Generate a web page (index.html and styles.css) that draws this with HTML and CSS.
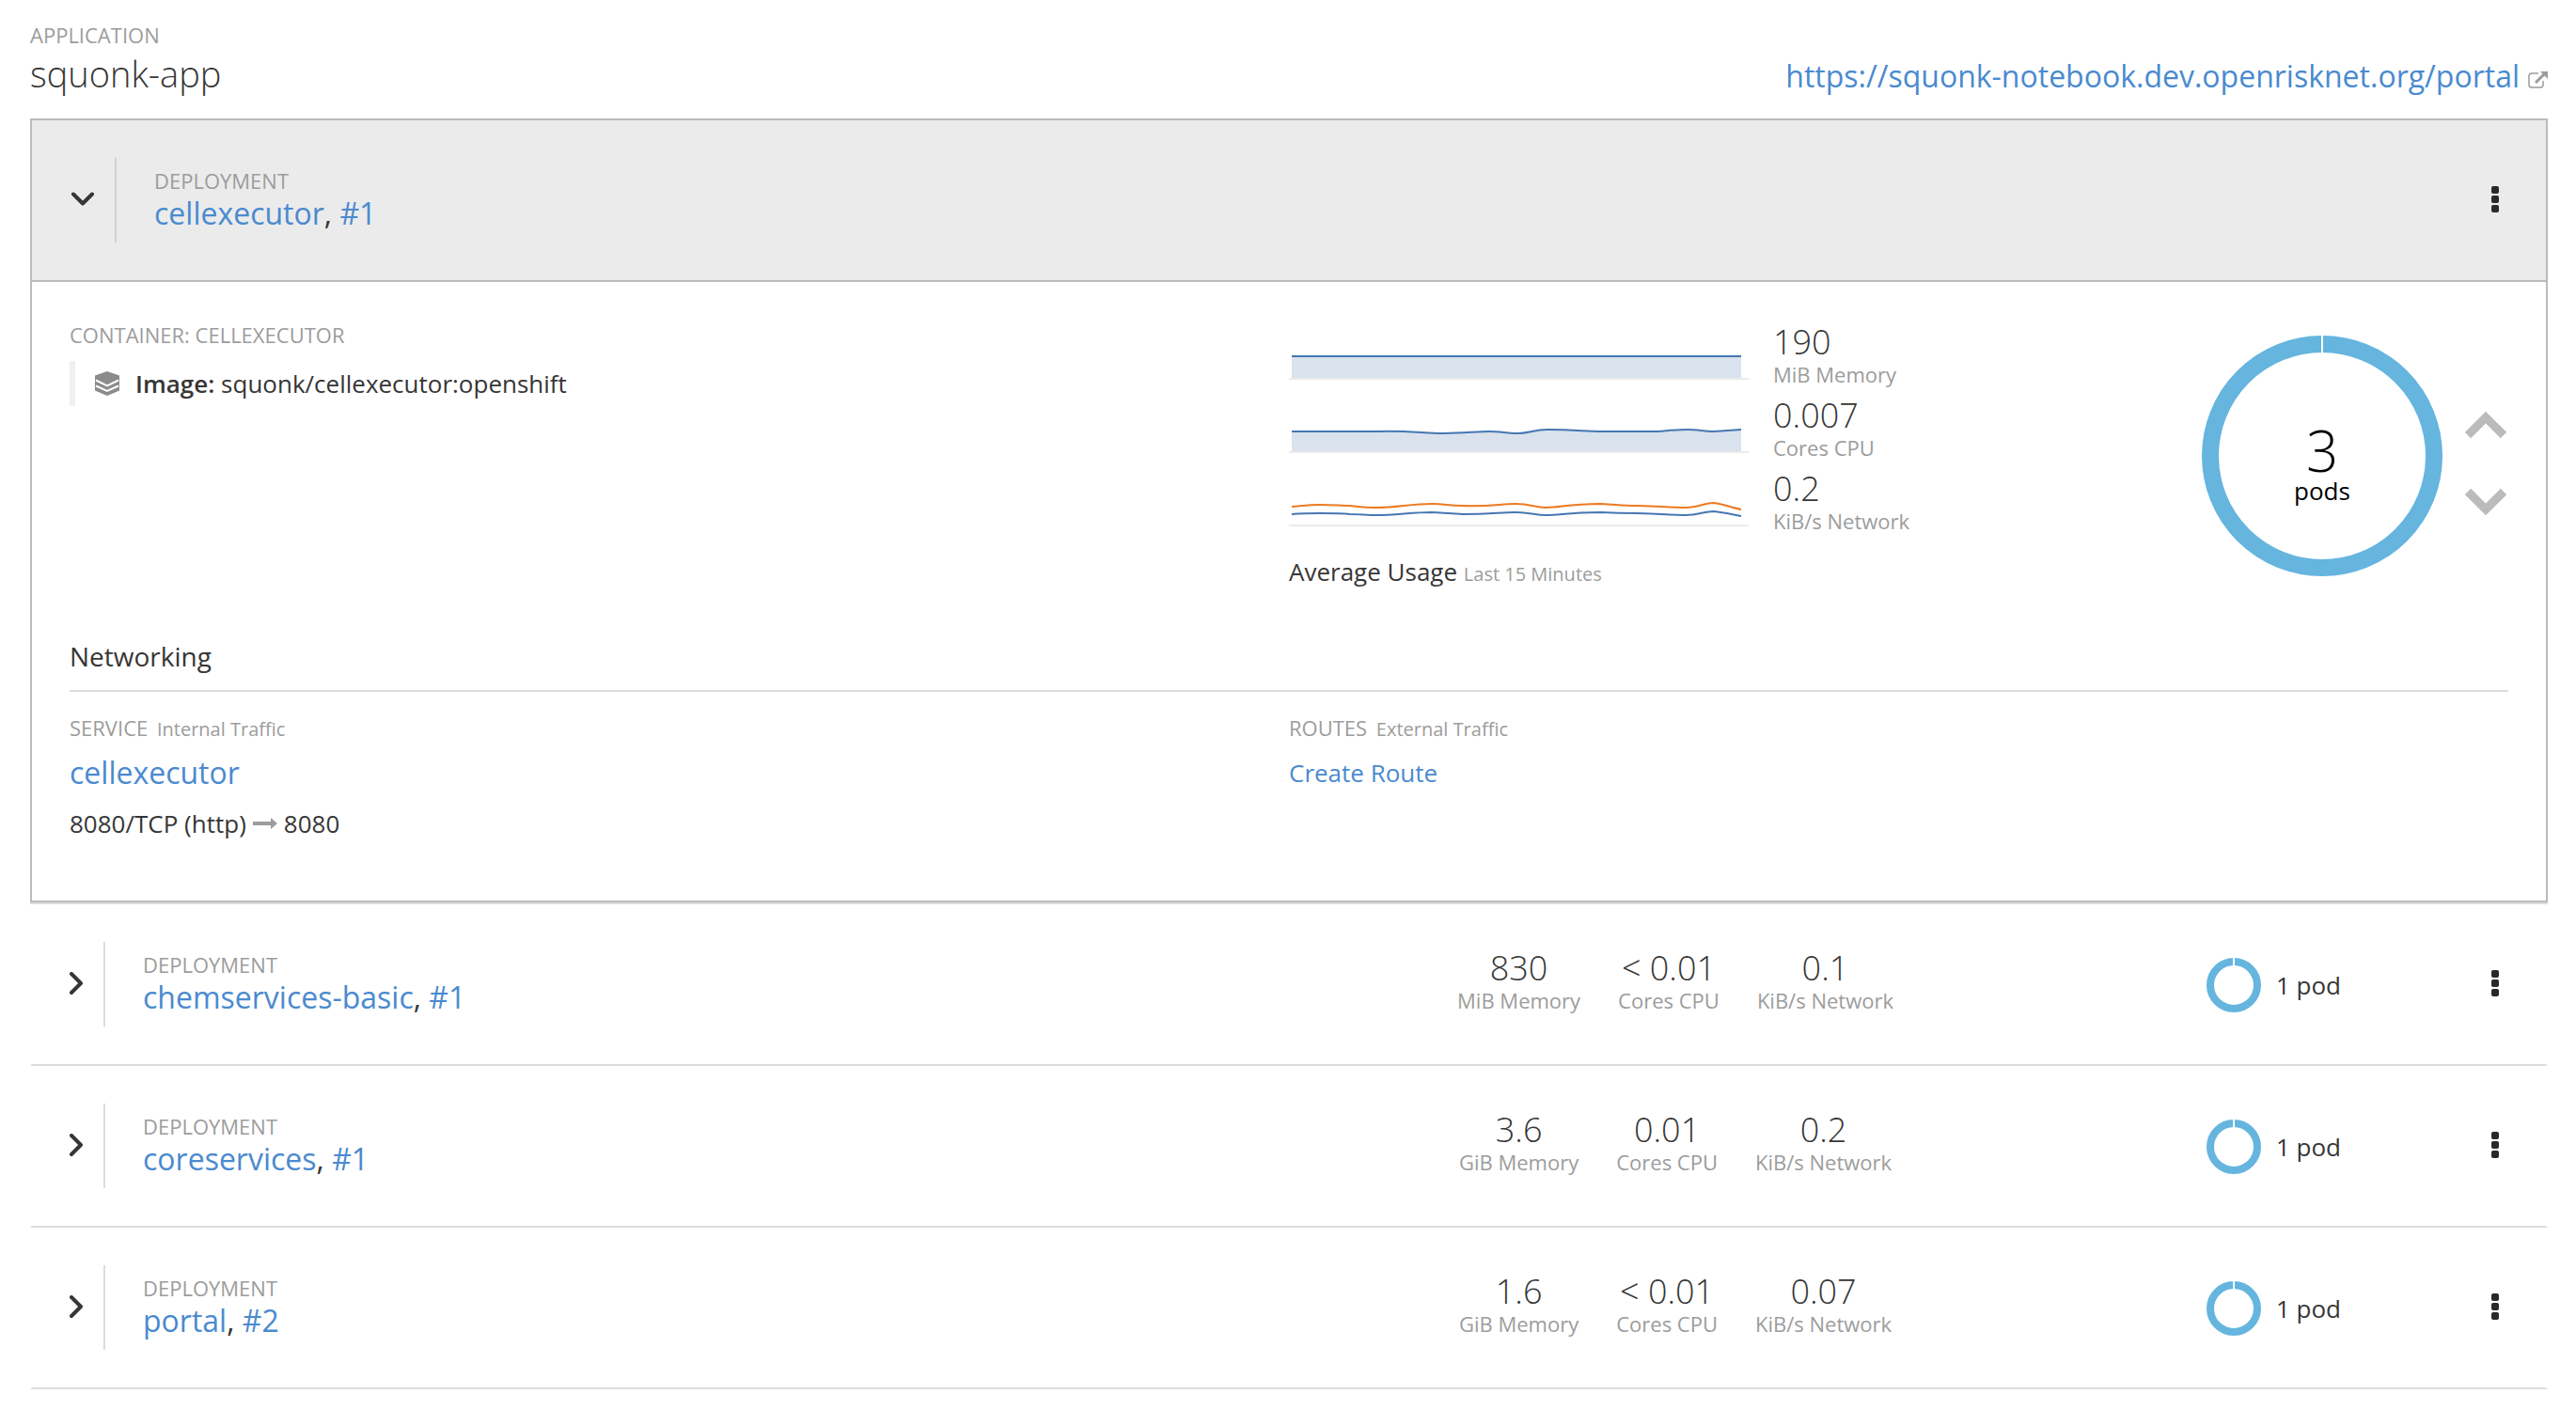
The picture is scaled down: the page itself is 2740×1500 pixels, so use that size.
FILE: index.html
```
<!DOCTYPE html>
<html lang="en">
<head>
    <meta charset="UTF-8">
    <meta name="viewport" content="width=device-width, initial-scale=1.0">
    <title>squonk-app - Overview</title>
    <link rel="stylesheet" href="styles.css">
</head>
<body>
    <!-- Shared icons -->
    <svg class="icon-defs" aria-hidden="true">
        <symbol id="icon-kebab" viewBox="0 0 8 30">
            <rect x="0" y="0" width="8" height="8" rx="2"/>
            <rect x="0" y="10" width="8" height="8" rx="2"/>
            <rect x="0" y="20" width="8" height="8" rx="2"/>
        </symbol>
        <symbol id="icon-angle-right" viewBox="0 0 14 26">
            <path d="M2 2L12 12L2 22"/>
        </symbol>
        <symbol id="icon-donut" viewBox="0 0 58 58">
            <circle cx="29" cy="29" r="25" fill="none" stroke="#65b5df" stroke-width="8"/>
            <path d="M29 0V9" stroke="#fff" stroke-width="2"/>
        </symbol>
    </svg>

    <header class="app-header">
        <div>
            <div class="label">APPLICATION</div>
            <h1>squonk-app</h1>
        </div>
        <div class="app-route">
            <a href="https://squonk-notebook.dev.openrisknet.org/portal">https://squonk-notebook.dev.openrisknet.org/portal</a>
            <svg class="icon-external" viewBox="0 0 22 18">
                <path d="M12 2H5Q2 2 2 5V14Q2 17 5 17H14Q17 17 17 14V10" fill="none" stroke="#9c9c9c" stroke-width="1.500"/>
                <path d="M9 12L18 3" stroke="#9c9c9c" stroke-width="3"/>
                <path d="M14 0H22V8Z" fill="#9c9c9c"/>
            </svg>
        </div>
    </header>

    <main>
        <section class="card">
            <div class="row card-header">
                <div class="row-name">
                    <button class="toggle toggle-open" aria-label="Collapse">
                        <svg viewBox="0 0 26 18"><path d="M4 2.500L14 12.500L24 2.500"/></svg>
                    </button>
                    <div class="names">
                        <div class="label">DEPLOYMENT</div>
                        <h2><a href="#">cellexecutor</a>, <a href="#">#1</a></h2>
                    </div>
                </div>
                <div class="row-end">
                    <button class="kebab" aria-label="Actions"><svg><use href="#icon-kebab"/></svg></button>
                </div>
            </div>

            <div class="card-body">
                <div class="columns overview">
                    <div>
                        <div class="label">CONTAINER: CELLEXECUTOR</div>
                        <div class="image-line">
                            <svg class="icon-layers" viewBox="0 0 26 26">
                                <path d="M13 0L26 4.500V20.500L13 26L0 20.500V4.500Z"/>
                                <path class="gap" d="M1 9.500L13 15.500L25 9.500M1 15.500L13 21L25 15.500"/>
                            </svg>
                            <span><strong>Image:</strong> squonk/cellexecutor:openshift</span>
                        </div>
                    </div>

                    <div class="usage">
                        <div class="trend">
                            <svg class="sparkline" viewBox="0 0 490 60">
                                <path class="area" d="M3 34H481V58H3Z"/>
                                <path class="axis" d="M0 59H489"/>
                                <path class="line" d="M3 35H481"/>
                            </svg>
                            <div class="trend-text">
                                <div class="value">190</div>
                                <div class="unit">MiB Memory</div>
                            </div>
                        </div>
                        <div class="trend">
                            <svg class="sparkline" viewBox="0 0 490 60">
                                <path class="area" d="M3 37H95C125 36 145 39 165 39C185 39 200 37 213 37C225 37 232 39 243 39C255 39 260 35 275 35C305 35 315 37 333 37H392C405 36 412 35 424 35C435 35 442 37 452 37L481 35V58H3Z"/>
                                <path class="axis" d="M0 59H489"/>
                                <path class="line" d="M3 37H95C125 36 145 39 165 39C185 39 200 37 213 37C225 37 232 39 243 39C255 39 260 35 275 35C305 35 315 37 333 37H392C405 36 412 35 424 35C435 35 442 37 452 37L481 35"/>
                            </svg>
                            <div class="trend-text">
                                <div class="value">0.007</div>
                                <div class="unit">Cores CPU</div>
                            </div>
                        </div>
                        <div class="trend">
                            <svg class="sparkline" viewBox="0 0 490 60">
                                <path class="axis" d="M0 59H489"/>
                                <path class="line line-sent" d="M3 39C15 38 22 37 33 37C48 37 55 38 65 38C75 39 83 40 93 40C115 40 130 36 152 36C165 36 170 38 185 38C215 39 225 36 241 36C257 36 262 40 273 40C290 40 295 36 332 36C350 37 355 38 370 38C400 39 410 40 422 40C435 40 442 35 452 35C462 36 470 40 481 42"/>
                                <path class="line" d="M3 47C15 46 22 46 33 46C48 46 55 46 65 47C75 47 83 48 93 48C115 48 130 45 152 45C165 46 170 46 185 47C215 47 225 45 241 45C257 45 262 48 273 48C290 48 295 45 332 45C350 46 355 46 370 46C400 47 410 48 422 48C435 48 442 44 452 44C462 45 470 47 481 49"/>
                            </svg>
                            <div class="trend-text">
                                <div class="value">0.2</div>
                                <div class="unit">KiB/s Network</div>
                            </div>
                        </div>
                        <div class="usage-caption">Average Usage <small>Last 15 Minutes</small></div>
                    </div>

                    <div class="scaler">
                        <svg class="donut-large" viewBox="0 0 256 256">
                            <circle cx="128" cy="128" r="119" fill="none" stroke="#65b5df" stroke-width="18"/>
                            <path d="M128 0V20" stroke="#fff" stroke-width="2"/>
                            <text class="donut-count" x="128" y="145">3</text>
                            <text class="donut-label" x="128" y="175">pods</text>
                        </svg>
                        <div class="scale-buttons">
                            <button aria-label="Scale up"><svg viewBox="0 0 46 30"><path d="M3 26L22 7L41 26"/></svg></button>
                            <button aria-label="Scale down"><svg viewBox="0 0 46 30"><path d="M3 4L22 23L41 4"/></svg></button>
                        </div>
                    </div>
                </div>

                <h3>Networking</h3>
                <div class="columns">
                    <div>
                        <div class="label">SERVICE <small>Internal Traffic</small></div>
                        <a class="service-name" href="#">cellexecutor</a>
                        <div class="port">
                            8080/TCP (http)
                            <svg class="icon-arrow" viewBox="0 0 26 16"><path d="M0 6H19V2L26 8L19 14V10H0Z"/></svg>
                            8080
                        </div>
                    </div>
                    <div>
                        <div class="label">ROUTES <small>External Traffic</small></div>
                        <a class="create-route" href="#">Create Route</a>
                    </div>
                </div>
            </div>
        </section>

        <section class="row">
            <div class="row-name">
                <button class="toggle" aria-label="Expand"><svg><use href="#icon-angle-right"/></svg></button>
                <div class="names">
                    <div class="label">DEPLOYMENT</div>
                    <h2><a href="#">chemservices-basic</a>, <a href="#">#1</a></h2>
                </div>
            </div>
            <div class="metrics">
                <div><div class="value">830</div><div class="unit">MiB Memory</div></div>
                <div><div class="value">&lt; 0.01</div><div class="unit">Cores CPU</div></div>
                <div><div class="value">0.1</div><div class="unit">KiB/s Network</div></div>
            </div>
            <div class="row-end">
                <div class="pods"><svg><use href="#icon-donut"/></svg>1 pod</div>
                <button class="kebab" aria-label="Actions"><svg><use href="#icon-kebab"/></svg></button>
            </div>
        </section>

        <section class="row">
            <div class="row-name">
                <button class="toggle" aria-label="Expand"><svg><use href="#icon-angle-right"/></svg></button>
                <div class="names">
                    <div class="label">DEPLOYMENT</div>
                    <h2><a href="#">coreservices</a>, <a href="#">#1</a></h2>
                </div>
            </div>
            <div class="metrics">
                <div><div class="value">3.6</div><div class="unit">GiB Memory</div></div>
                <div><div class="value">0.01</div><div class="unit">Cores CPU</div></div>
                <div><div class="value">0.2</div><div class="unit">KiB/s Network</div></div>
            </div>
            <div class="row-end">
                <div class="pods"><svg><use href="#icon-donut"/></svg>1 pod</div>
                <button class="kebab" aria-label="Actions"><svg><use href="#icon-kebab"/></svg></button>
            </div>
        </section>

        <section class="row">
            <div class="row-name">
                <button class="toggle" aria-label="Expand"><svg><use href="#icon-angle-right"/></svg></button>
                <div class="names">
                    <div class="label">DEPLOYMENT</div>
                    <h2><a href="#">portal</a>, <a href="#">#2</a></h2>
                </div>
            </div>
            <div class="metrics">
                <div><div class="value">1.6</div><div class="unit">GiB Memory</div></div>
                <div><div class="value">&lt; 0.01</div><div class="unit">Cores CPU</div></div>
                <div><div class="value">0.07</div><div class="unit">KiB/s Network</div></div>
            </div>
            <div class="row-end">
                <div class="pods"><svg><use href="#icon-donut"/></svg>1 pod</div>
                <button class="kebab" aria-label="Actions"><svg><use href="#icon-kebab"/></svg></button>
            </div>
        </section>
    </main>
</body>
</html>
```
FILE: styles.css
```
* {
    box-sizing: border-box;
}

body {
    margin: 0;
    padding: 21px 30px 21px 32px;
    background: #fff;
    color: #363636;
    font-family: "Open Sans", sans-serif;
    font-size: 26px;
    line-height: 40px;
}

a {
    color: #4a8acf;
    text-decoration: none;
}

a:hover {
    text-decoration: underline;
}

h1,
h2,
h3 {
    margin: 0;
    font-weight: 400;
}

button {
    padding: 0;
    border: none;
    background: none;
    cursor: pointer;
}

svg {
    display: block;
}

small {
    font-size: 20px;
    line-height: 20px;
}

.icon-defs {
    display: none;
}

.label {
    color: #9c9c9c;
    font-size: 22px;
    line-height: 32px;
}

.label small {
    margin-left: 4px;
}

.value {
    font-size: 36px;
    font-weight: 300;
    line-height: 40px;
}

.unit {
    color: #9c9c9c;
    font-size: 22px;
    line-height: 28px;
}

/* Application header */
.app-header {
    display: flex;
    justify-content: space-between;
    align-items: flex-end;
    padding-bottom: 23px;
}

.app-header h1 {
    font-size: 38px;
    font-weight: 300;
    line-height: 50px;
}

.app-route {
    display: flex;
    align-items: center;
    gap: 8px;
    font-size: 32px;
    line-height: 44px;
}

.icon-external {
    width: 22px;
    height: 18px;
    margin-top: 8px;
}

/* Deployment rows */
.row {
    display: grid;
    grid-template-columns: 50fr 32fr 18fr;
    align-items: center;
    padding: 40px;
    border: 2px solid transparent;
    border-top: none;
    border-bottom-color: #dcdcdc;
}

.row-name {
    display: flex;
    align-items: stretch;
}

.toggle {
    padding-right: 22px;
    border-right: 2px solid #dcdcdc;
}

.toggle svg {
    width: 14px;
    height: 26px;
    fill: none;
    stroke: #363636;
    stroke-width: 4;
    stroke-linecap: round;
    stroke-linejoin: round;
}

.toggle-open {
    border-right-color: #d1d1d1;
}

.toggle-open svg {
    width: 26px;
    height: 18px;
}

.names {
    padding: 8px 40px 12px;
}

.names h2 {
    font-size: 32px;
    line-height: 38px;
}

.metrics {
    display: flex;
    justify-content: center;
    gap: 40px;
    padding: 0 8px 6px 0;
    text-align: center;
}

.row-end {
    grid-column: 3;
    display: flex;
    justify-content: flex-end;
    align-items: center;
    gap: 150px;
}

.pods {
    display: flex;
    align-items: center;
    gap: 16px;
    padding-top: 2px;
    white-space: nowrap;
}

.pods svg {
    width: 58px;
    height: 58px;
}

.kebab {
    padding: 10px;
}

.kebab svg {
    width: 8px;
    height: 30px;
    fill: #292929;
}

/* Expanded deployment */
.card {
    margin-bottom: 2px;
    border: 2px solid #bbb;
    box-shadow: 0 2px 0 #dcdcdc;
}

.card-header {
    border: none;
    border-bottom: 2px solid #bbb;
    background: #ebebeb;
}

.card-body {
    padding: 40px 40px 62px;
}

.columns {
    display: grid;
    grid-template-columns: 1fr 1fr;
}

.overview {
    grid-template-columns: 50fr 32fr 18fr;
    align-items: start;
}

.image-line {
    display: flex;
    align-items: center;
    gap: 17px;
    margin-top: 12px;
    padding-left: 21px;
    border-left: 6px solid #f0f0f0;
    line-height: 48px;
}

.image-line strong {
    font-weight: 600;
}

.icon-layers {
    width: 26px;
    height: 26px;
    fill: #8b8b8b;
}

.icon-layers .gap {
    fill: none;
    stroke: #fff;
    stroke-width: 2;
}

.trend {
    display: flex;
    align-items: flex-end;
    gap: 25px;
    height: 78px;
}

.sparkline {
    width: 490px;
    height: 60px;
    margin-bottom: 14px;
}

.trend-text {
    margin-bottom: 6px;
}

.area {
    fill: #d9e2ed;
}

.axis {
    stroke: #ebebeb;
    stroke-width: 2;
}

.line {
    fill: none;
    stroke: #4677b2;
    stroke-width: 2;
}

.line-sent {
    stroke: #ec7a21;
}

.usage-caption {
    margin-top: 14px;
}

.usage-caption small {
    color: #9c9c9c;
}

.scaler {
    display: flex;
    justify-content: flex-end;
    align-items: center;
    gap: 24px;
    padding-top: 17px;
}

.donut-large {
    width: 256px;
    height: 256px;
}

.donut-large text {
    fill: #000;
    text-anchor: middle;
}

.donut-count {
    font-size: 60px;
    font-weight: 300;
}

.donut-label {
    font-size: 26px;
}

.scale-buttons {
    display: grid;
    gap: 52px;
    padding-top: 16px;
}

.scale-buttons svg {
    width: 46px;
    height: 30px;
    fill: none;
    stroke: #bbb;
    stroke-width: 9;
}

.card-body h3 {
    margin: 50px 0 22px;
    padding-bottom: 16px;
    border-bottom: 2px solid #dcdcdc;
    font-size: 28px;
}

.service-name {
    display: block;
    margin-top: 12px;
    font-size: 32px;
}

.create-route {
    display: block;
    margin-top: 12px;
}

.port {
    display: flex;
    align-items: center;
    gap: 7px;
    margin-top: 14px;
}

.icon-arrow {
    width: 26px;
    height: 16px;
    fill: #9c9c9c;
}
```
